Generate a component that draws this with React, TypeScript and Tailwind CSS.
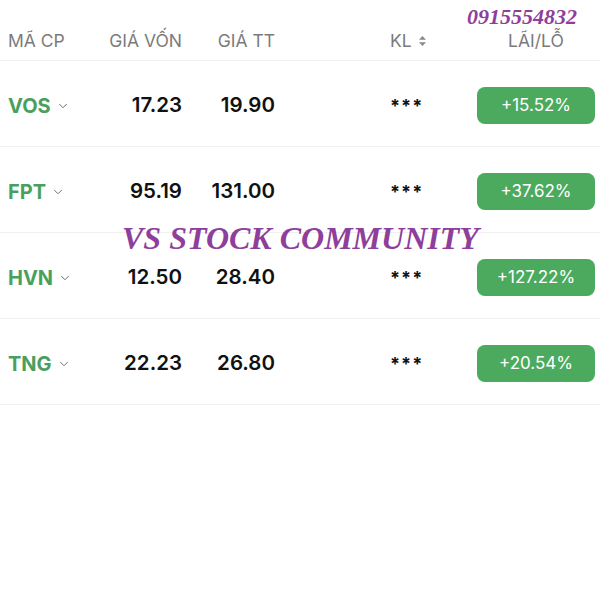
import { ChevronDown } from "lucide-react";

interface Row {
  code: string;
  cost: string;
  price: string;
  pct: string;
}

const rows: Row[] = [
  { code: "VOS", cost: "17.23", price: "19.90", pct: "+15.52%" },
  { code: "FPT", cost: "95.19", price: "131.00", pct: "+37.62%" },
  { code: "HVN", cost: "12.50", price: "28.40", pct: "+127.22%" },
  { code: "TNG", cost: "22.23", price: "26.80", pct: "+20.54%" },
];

function SortIcon() {
  return (
    <svg width="9" height="12" viewBox="0 0 9 12" className="ml-[6px]">
      <path d="M4.5 1 L8 4.8 L1 4.8 Z" fill="#8a8a8a" />
      <path d="M4.5 11 L8 7.2 L1 7.2 Z" fill="#8a8a8a" />
    </svg>
  );
}

export default function App() {
  return (
    <div
      className="relative w-[600px] h-[600px] bg-white overflow-hidden"
      style={{ fontFamily: "Inter, 'Noto Sans', sans-serif" }}
    >
      <div className="flex items-center h-[61px] pt-[22px] border-b border-[#f0f0f0] text-[17.5px] text-[#7b7b7b]">
        <div className="w-[100px] pl-[8px]">MÃ CP</div>
        <div className="w-[82px] text-right whitespace-nowrap">GIÁ VỐN</div>
        <div className="w-[93px] text-right">GIÁ TT</div>
        <div className="ml-[115px] w-[87px] flex items-center">
          KL
          <SortIcon />
        </div>
        <div className="w-[118px] text-center">LÃI/LỖ</div>
      </div>

      {rows.map((r) => (
        <div key={r.code} className="flex items-center h-[86px] pt-[4px] border-b border-[#f0f0f0]">
          <div className="w-[100px] pl-[8px] flex items-center text-[20px] font-bold text-[#4b9f5e]">
            {r.code}
            <ChevronDown size={14} strokeWidth={1.6} className="ml-[5px] text-[#666]" />
          </div>
          <div className="w-[82px] text-right text-[20.5px] font-semibold text-[#111]">{r.cost}</div>
          <div className="w-[93px] text-right text-[20.5px] font-semibold text-[#111]">{r.price}</div>
          <div className="ml-[115px] w-[87px] text-[18px] font-bold text-[#111] tracking-[1px]">***</div>
          <div className="w-[118px] h-[37px] rounded-[8px] bg-[#4caa5f] flex items-center justify-center text-[17px] text-white">
            {r.pct}
          </div>
        </div>
      ))}

      <div
        className="absolute left-[467px] top-[0px] text-[22px] font-bold italic text-[#8e3e9b]"
        style={{ fontFamily: "'Liberation Serif', serif" }}
      >
        0915554832
      </div>
      <div
        className="absolute left-[122px] top-[214px] text-[32px] font-bold italic text-[#8e3e9b] whitespace-nowrap"
        style={{ fontFamily: "'Liberation Serif', serif" }}
      >
        VS STOCK COMMUNITY
      </div>
    </div>
  );
}
